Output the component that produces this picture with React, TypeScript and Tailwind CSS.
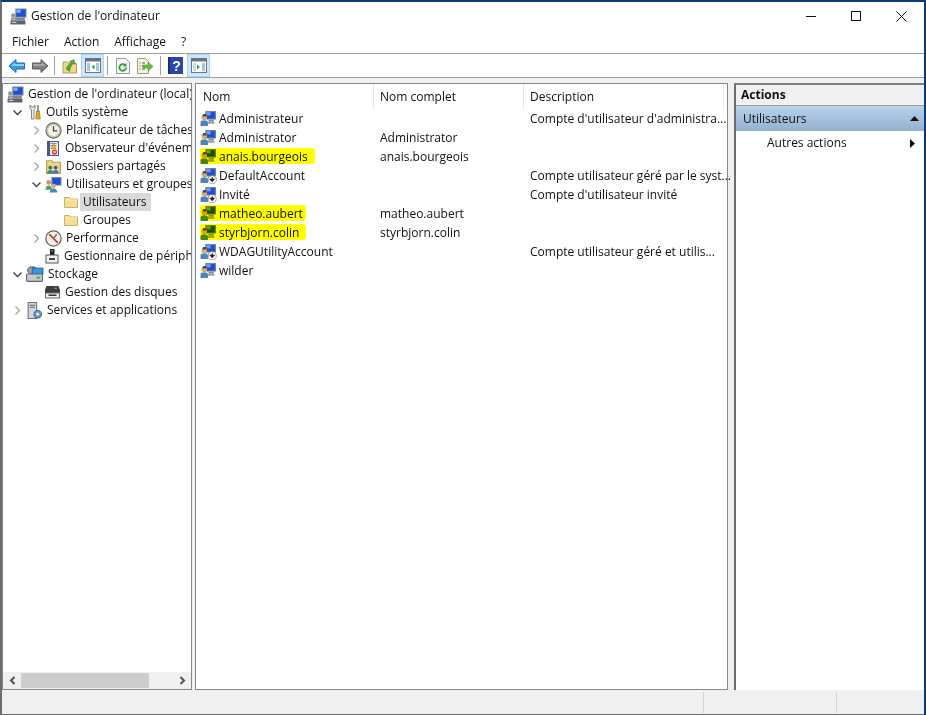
import type { ReactNode } from 'react';

// Petites icones MMC dessinees a la main (16x16)
function Computer() {
  return (
    <g>
      <rect x="5" y="1" width="10" height="8" fill="#6f7f90" />
      <rect x="6" y="2" width="8" height="6" fill="#1f4fd8" />
      <rect x="6" y="2" width="4" height="3" fill="#6aa4ee" />
      <rect x="8" y="9" width="5" height="2" fill="#8a8f96" />
    </g>
  );
}

function UserIcon({ down }: { down?: boolean }) {
  return (
    <svg width="17" height="17" viewBox="0 0 16 16" className="shrink-0">
      <Computer />
      <circle cx="4" cy="7" r="2.6" fill="#d9a878" />
      <path d="M3 3.8h3v2.4H2.2z" fill="#5a4632" />
      <path d="M0.5 15v-3.2c0-1.4 1.4-2.2 3.5-2.2s3.5.8 3.5 2.2V15z" fill="#4c86b8" />
      <path d="M7.5 11h6v2h-6z" fill="#9aa3ad" />
      {down && (
        <g>
          <circle cx="11.5" cy="12" r="3.8" fill="#fff" stroke="#777" strokeWidth="0.6" />
          <path d="M11.5 9.6v3M9.8 11.6l1.7 2 1.7-2z" stroke="#222" strokeWidth="1.1" fill="#222" />
        </g>
      )}
    </svg>
  );
}

function Folder() {
  return (
    <svg width="16" height="16" viewBox="0 0 16 16" className="shrink-0">
      <path d="M1.5 3.5h5l1 1.5h7v8.5h-13z" fill="#f7dc94" stroke="#cdb06a" />
      <path d="M2 6h12" stroke="#fdf0c4" />
    </svg>
  );
}

function MgmtIcon() {
  return (
    <svg width="17" height="17" viewBox="0 0 16 16" className="shrink-0">
      <rect x="5" y="0.5" width="10.5" height="8.5" fill="#6f7f90" />
      <rect x="6" y="1.5" width="8.5" height="6.5" fill="#1f4fd8" />
      <rect x="6" y="1.5" width="4" height="3" fill="#7cb0f0" />
      <rect x="1" y="9" width="13" height="3" fill="#7f878f" />
      <rect x="0.5" y="12" width="14" height="3.5" fill="#5b636b" />
      <path d="M2 13.5h4M2 10.5h3" stroke="#c8ccd0" />
      <circle cx="3" cy="7" r="2" fill="#8f99a3" />
    </svg>
  );
}

function Tools() {
  return (
    <svg width="16" height="17" viewBox="0 0 16 17" className="shrink-0">
      <path d="M4 1v3.5l1.5 1V15H8V5.5l1-1V1L7.5 3h-2z" fill="#eee" stroke="#777" strokeWidth="0.9" />
      <rect x="11" y="1" width="2" height="6" fill="#999" />
      <path d="M10.5 7h3l.7 8h-4.400z" fill="#e9a417" stroke="#8a6410" strokeWidth="0.6" />
    </svg>
  );
}

function Clock() {
  return (
    <svg width="17" height="17" viewBox="0 0 16 16" className="shrink-0">
      <circle cx="8" cy="8" r="7.200" fill="#c9c2ac" stroke="#6f6f6f" />
      <circle cx="8" cy="8" r="5.200" fill="#f5f1e4" />
      <path d="M8 4v4.300h3.500" fill="none" stroke="#3d3d3d" strokeWidth="1.200" />
    </svg>
  );
}

function EventLog() {
  return (
    <svg width="16" height="17" viewBox="0 0 16 17" className="shrink-0">
      <rect x="2" y="1" width="12" height="15" fill="#40588c" />
      <rect x="5" y="2" width="8" height="13" fill="#f3ecd8" />
      <path d="M5.500 3.500h6M5.500 5.500h6" stroke="#888" />
      <path d="M8.500 4l2.500 4.500H6z" fill="#f2c422" stroke="#7a5c00" strokeWidth="0.5" />
      <circle cx="9.500" cy="12" r="2.600" fill="#d8343c" />
      <path d="M8.500 11l2 2M10.500 11l-2 2" stroke="#fff" />
    </svg>
  );
}

function SharedFolder() {
  return (
    <svg width="17" height="17" viewBox="0 0 16 16" className="shrink-0">
      <path d="M1.500 2.500h5l1 1.500h7v10.500h-13z" fill="#eed488" stroke="#b89a52" />
      <circle cx="5" cy="9" r="1.800" fill="#2f7a52" />
      <path d="M2 14.500c0-2 1.200-3.200 3-3.200s3 1.200 3 3.200z" fill="#3b8f64" />
      <circle cx="10" cy="9" r="1.800" fill="#3a5fa8" />
      <path d="M7 14.500c0-2 1.200-3.200 3-3.200s3 1.200 3 3.200z" fill="#4a73c0" />
    </svg>
  );
}

function UsersGroup() {
  return (
    <svg width="17" height="17" viewBox="0 0 16 16" className="shrink-0">
      <rect x="6" y="1" width="9.500" height="8" fill="#6f7f90" />
      <rect x="7" y="2" width="7.500" height="6" fill="#1f4fd8" />
      <circle cx="3.500" cy="6" r="2.300" fill="#c99a6c" />
      <path d="M0.500 13c0-2.500 1.300-4 3-4s3 1.500 3 4z" fill="#4f9a64" />
      <circle cx="8" cy="9.500" r="2.200" fill="#d9ad80" />
      <path d="M4.500 15.500c0-2.500 1.500-3.800 3.500-3.800s3.500 1.300 3.500 3.800z" fill="#4c86b8" />
    </svg>
  );
}

function PerfIcon() {
  return (
    <svg width="17" height="17" viewBox="0 0 16 16" className="shrink-0">
      <circle cx="8" cy="8" r="7.200" fill="#f4f0e6" stroke="#666" strokeWidth="1.200" />
      <path d="M4 4l8 8" stroke="#d8202a" strokeWidth="1.600" />
      <path d="M8 8l3-4" stroke="#2c8a4a" strokeWidth="1.200" />
    </svg>
  );
}

function DeviceIcon() {
  return (
    <svg width="16" height="17" viewBox="0 0 16 17" className="shrink-0">
      <rect x="6" y="1" width="4.500" height="6" fill="#222" />
      <rect x="7.500" y="2" width="1.500" height="1.500" fill="#39c13f" />
      <rect x="2" y="7" width="12" height="8" fill="#f0f0f0" stroke="#555" />
      <rect x="5" y="10" width="6" height="2" fill="#444" />
    </svg>
  );
}

function StorageIcon() {
  return (
    <svg width="18" height="17" viewBox="0 0 17 16" className="shrink-0">
      <ellipse cx="6" cy="4" rx="4.500" ry="3.200" fill="#9aa3ad" stroke="#5e666e" />
      <rect x="6" y="2" width="10" height="5.500" fill="#2f9be0" stroke="#236fa3" />
      <rect x="0.500" y="7.500" width="15" height="7" rx="1" fill="#c4cad0" stroke="#5e666e" />
      <rect x="10" y="10" width="3" height="2" fill="#39b54a" />
    </svg>
  );
}

function DiskIcon() {
  return (
    <svg width="17" height="16" viewBox="0 0 16 16" className="shrink-0">
      <path d="M2 2h12l1.500 4v3H.500V6z" fill="#3c3c3c" />
      <rect x="10" y="3.500" width="2.500" height="1.500" fill="#3ec545" />
      <rect x="1" y="9" width="14" height="5" fill="#efefef" stroke="#666" />
      <rect x="4" y="10.500" width="8" height="1.500" fill="#333" />
    </svg>
  );
}

function ServicesIcon() {
  return (
    <svg width="17" height="17" viewBox="0 0 16 16" className="shrink-0">
      <rect x="2" y="0.500" width="8" height="15" fill="#d5d9dd" stroke="#6a7279" />
      <path d="M3.500 3h5M3.500 5h5" stroke="#5a6269" />
      <circle cx="11" cy="11.500" r="3.500" fill="#6d9ac6" stroke="#3d6994" />
      <circle cx="11" cy="11.500" r="1.300" fill="#fff" />
    </svg>
  );
}

function Chevron({ open }: { open?: boolean }) {
  return (
    <svg width="9" height="9" viewBox="0 0 9 9" className="shrink-0">
      {open ? (
        <path d="M0.500 2.500l4 4 4-4" fill="none" stroke="#3f3f3f" strokeWidth="1.300" />
      ) : (
        <path d="M2.500 0.500l4 4-4 4" fill="none" stroke="#a6a6a6" strokeWidth="1.300" />
      )}
    </svg>
  );
}

function BackArrow() {
  return (
    <svg width="18" height="16" viewBox="0 0 18 16">
      <path d="M8 1.500L1 8l7 6.500V11h8.500V5H8z" fill="#2f9bf0" stroke="#1a6cb8" />
      <path d="M7 4.500L3 8h13V6H7z" fill="#8fd0fb" />
    </svg>
  );
}

function ForwardArrow() {
  return (
    <svg width="18" height="16" viewBox="0 0 18 16">
      <path d="M10 1.500L17 8l-7 6.500V11H1.500V5H10z" fill="#808080" stroke="#5c5c5c" />
      <path d="M11 4.500L15 8H2V6h9z" fill="#a8a8a8" />
    </svg>
  );
}

function UpFolder() {
  return (
    <svg width="16" height="16" viewBox="0 0 16 16">
      <path d="M1 4h5l1 1.500h7.500V15H1z" fill="#f1d68c" stroke="#b99a50" />
      <path d="M4 11c1-3 3-5 5-6L7.500 3.500 12 1.500l1 5-1.500-1.300C9.500 7 8 10 7.500 13.500z" fill="#4fae2e" stroke="#2f7a18" strokeWidth="0.500" />
    </svg>
  );
}

function PaneIcon({ side }: { side: 'left' | 'right' }) {
  return (
    <svg width="16" height="15" viewBox="0 0 16 15">
      <rect x="0.500" y="0.500" width="15" height="14" fill="#fff" stroke="#6b7480" />
      <rect x="1" y="1" width="14" height="2.500" fill="#6b7480" />
      <rect x="2" y="5" width="3" height="8" fill={side === 'right' ? '#c8dcf0' : '#a9c4e0'} />
      <rect x="11" y="5" width="3" height="8" fill="#a9c4e0" />
      {side === 'left' ? <path d="M9.500 6.500v5L6.500 9z" fill="#2fa84a" /> : <path d="M6 6.500v5L9 9z" fill="#2fa84a" />}
    </svg>
  );
}

function Refresh() {
  return (
    <svg width="14" height="16" viewBox="0 0 14 16">
      <path d="M0.500 0.500h9l4 4v11H.500z" fill="#f6f6f2" stroke="#9a9a9a" />
      <path d="M10 9.500a3.300 3.300 0 1 1-1-2.400" fill="none" stroke="#2f9a3a" strokeWidth="1.800" />
      <path d="M10.500 5v3.500H7z" fill="#2f9a3a" />
    </svg>
  );
}

function ExportList() {
  return (
    <svg width="17" height="16" viewBox="0 0 17 16">
      <path d="M0.500 0.500h8l3 3v12H.500z" fill="#f8f3de" stroke="#a09a80" />
      <path d="M2.500 5h1M5 5h3M2.500 8h1M5 8h3M2.500 11h1M5 11h3" stroke="#555" />
      <path d="M6 7h5V4l5 4.500-5 4.500v-3H6z" fill="#5fc23a" stroke="#3a8a1e" strokeWidth="0.500" />
    </svg>
  );
}

function HelpBook() {
  return (
    <svg width="15" height="17" viewBox="0 0 15 17" className="shrink-0">
      <rect width="15" height="17" fill="#2c47a8" />
      <rect x="0" y="0" width="2" height="17" fill="#1b2c78" />
      <text x="8.500" y="14" fontSize="14" fontWeight="700" fill="#fff" textAnchor="middle" fontFamily="Liberation Sans, sans-serif">?</text>
    </svg>
  );
}

function ToolBtn({ children, active }: { children: ReactNode; active?: boolean }) {
  return (
    <div className={`flex h-[23px] w-[23px] items-center justify-center ${active ? 'border border-[#a8d4f5] bg-[#cce8ff]' : ''}`}>
      {children}
    </div>
  );
}

function Sep() {
  return <div className="mx-[3px] h-[19px] w-px bg-[#a0a0a0]" />;
}

type TreeItem = { label: string; icon: ReactNode; pad: string; chevron?: 'open' | 'closed'; selected?: boolean };

const tree: TreeItem[] = [
  { label: "Gestion de l'ordinateur (local)", icon: <MgmtIcon />, pad: 'pl-[4px]' },
  { label: 'Outils système', icon: <Tools />, pad: 'pl-[10px]', chevron: 'open' },
  { label: 'Planificateur de tâches', icon: <Clock />, pad: 'pl-[29px]', chevron: 'closed' },
  { label: "Observateur d'événements", icon: <EventLog />, pad: 'pl-[29px]', chevron: 'closed' },
  { label: 'Dossiers partagés', icon: <SharedFolder />, pad: 'pl-[29px]', chevron: 'closed' },
  { label: 'Utilisateurs et groupes locaux', icon: <UsersGroup />, pad: 'pl-[29px]', chevron: 'open' },
  { label: 'Utilisateurs', icon: <Folder />, pad: 'pl-[60px]', selected: true },
  { label: 'Groupes', icon: <Folder />, pad: 'pl-[60px]' },
  { label: 'Performance', icon: <PerfIcon />, pad: 'pl-[29px]', chevron: 'closed' },
  { label: 'Gestionnaire de périphériques', icon: <DeviceIcon />, pad: 'pl-[41px]' },
  { label: 'Stockage', icon: <StorageIcon />, pad: 'pl-[10px]', chevron: 'open' },
  { label: 'Gestion des disques', icon: <DiskIcon />, pad: 'pl-[41px]' },
  { label: 'Services et applications', icon: <ServicesIcon />, pad: 'pl-[10px]', chevron: 'closed' },
];

type UserRow = { name: string; full?: string; desc?: string; down?: boolean; mark?: string };

const users: UserRow[] = [
  { name: 'Administrateur', desc: "Compte d'utilisateur d'administra..." },
  { name: 'Administrator', full: 'Administrator' },
  { name: 'anais.bourgeois', full: 'anais.bourgeois', mark: 'w-[115px]' },
  { name: 'DefaultAccount', desc: 'Compte utilisateur géré par le syst...', down: true },
  { name: 'Invité', desc: "Compte d'utilisateur invité", down: true },
  { name: 'matheo.aubert', full: 'matheo.aubert', mark: 'w-[106px]' },
  { name: 'styrbjorn.colin', full: 'styrbjorn.colin', mark: 'w-[106px]' },
  { name: 'WDAGUtilityAccount', desc: 'Compte utilisateur géré et utilis...', down: true },
  { name: 'wilder' },
];

export default function App() {
  return (
    <div
      className="flex h-[715px] w-[926px] flex-col overflow-hidden border-t-2 border-r-2 border-l-2 border-t-[#0b3a7c] border-r-[#0b3a7c] border-l-[#6d6d6d] bg-[#f0f0f0] text-[12px] leading-none text-[#111]"
      style={{ fontFamily: '"Open Sans", "Noto Sans", sans-serif' }}
    >
      {/* barre de titre */}
      <div className="flex h-[28px] shrink-0 items-center bg-white pl-[8px]">
        <MgmtIcon />
        <span className="ml-[4px]">Gestion de l'ordinateur</span>
        <div className="ml-auto flex items-center">
          <div className="flex w-[45px] justify-center">
            <div className="h-px w-[10px] bg-[#111]" />
          </div>
          <div className="flex w-[45px] justify-center">
            <div className="h-[10px] w-[10px] border border-[#111]" />
          </div>
          <div className="flex w-[46px] justify-center">
            <svg width="11" height="11" viewBox="0 0 11 11">
              <path d="M0.500 0.500l10 10M10.500 0.500l-10 10" stroke="#111" />
            </svg>
          </div>
        </div>
      </div>

      {/* menu */}
      <div className="flex h-[24px] shrink-0 items-center gap-[15px] border-b border-[#a0a0a0] bg-white pl-[10px]">
        <span>Fichier</span>
        <span>Action</span>
        <span>Affichage</span>
        <span>?</span>
      </div>

      {/* barre d'outils */}
      <div className="flex h-[24px] shrink-0 items-center border-b border-[#a0a0a0] bg-white pl-[3px]">
        <ToolBtn><BackArrow /></ToolBtn>
        <ToolBtn><ForwardArrow /></ToolBtn>
        <Sep />
        <ToolBtn><UpFolder /></ToolBtn>
        <ToolBtn active><PaneIcon side="left" /></ToolBtn>
        <Sep />
        <ToolBtn><Refresh /></ToolBtn>
        <ToolBtn><ExportList /></ToolBtn>
        <Sep />
        <ToolBtn><HelpBook /></ToolBtn>
        <ToolBtn active><PaneIcon side="right" /></ToolBtn>
      </div>

      {/* panneaux */}
      <div className="flex min-h-0 flex-1 pt-[5px]">
        {/* arbre */}
        <div className="flex w-[190px] shrink-0 flex-col border border-[#828790] bg-white">
          <div className="min-h-0 flex-1 overflow-hidden pt-[1px]">
            {tree.map((t) => (
              <div key={t.label} className={`flex h-[18px] items-center whitespace-nowrap ${t.pad}`}>
                {t.chevron && (
                  <span className="mr-[4px] flex w-[9px] justify-center">
                    <Chevron open={t.chevron === 'open'} />
                  </span>
                )}
                {t.icon}
                <span className={`ml-[1px] flex h-[18px] items-center pl-[3px] pr-[4px] ${t.selected ? 'bg-[#d9d9d9]' : ''}`}>{t.label}</span>
              </div>
            ))}
          </div>
          <div className="flex h-[17px] shrink-0 items-center bg-[#f0f0f0]">
            <div className="flex w-[18px] justify-center">
              <svg width="7" height="9" viewBox="0 0 7 9"><path d="M5.500 1L2 4.500 5.500 8" fill="none" stroke="#505050" strokeWidth="2" /></svg>
            </div>
            <div className="h-[15px] w-[128px] bg-[#cdcdcd]" />
            <div className="ml-auto flex w-[18px] justify-center">
              <svg width="7" height="9" viewBox="0 0 7 9"><path d="M1.500 1L5 4.500 1.500 8" fill="none" stroke="#505050" strokeWidth="2" /></svg>
            </div>
          </div>
        </div>

        {/* liste */}
        <div className="ml-[3px] w-[533px] shrink-0 border border-[#828790] bg-white">
          <div className="flex h-[25px] items-center">
            <div className="flex h-full w-[178px] items-center border-r border-[#e5e5e5] pl-[7px]">Nom</div>
            <div className="flex h-full w-[150px] items-center border-r border-[#e5e5e5] pl-[6px]">Nom complet</div>
            <div className="flex h-full w-[200px] items-center border-r border-[#e5e5e5] pl-[6px]">Description</div>
          </div>
          {users.map((u) => (
            <div key={u.name} className="relative flex h-[19px] items-center whitespace-nowrap">
              <div className="flex h-full w-[178px] items-center pl-[4px]">
                <UserIcon down={u.down} />
                <span className="ml-[2px]">{u.name}</span>
              </div>
              <div className="w-[150px] pl-[6px]">{u.full}</div>
              <div className="w-[200px] pl-[6px]">{u.desc}</div>
              {u.mark && <div className={`absolute top-[1px] left-[4px] h-[16px] rounded-[3px] bg-[#ffff00] mix-blend-multiply ${u.mark}`} />}
            </div>
          ))}
        </div>

        {/* actions */}
        <div className="ml-[6px] min-w-0 flex-1 border-t-2 border-l-2 border-t-[#7f7f7f] border-l-[#6d6d6d] bg-white">
          <div className="flex h-[21px] items-center border-b border-[#a0a0a0] bg-[#f0f0f0] pl-[5px] font-bold">Actions</div>
          <div className="flex h-[25px] items-center bg-gradient-to-b from-[#bad1ea] to-[#94b1d1] pl-[7px] pr-[5px]">
            <span>Utilisateurs</span>
            <svg width="9" height="5" viewBox="0 0 9 5" className="ml-auto"><path d="M4.500 0L9 5H0z" fill="#111" /></svg>
          </div>
          <div className="flex h-[24px] items-center pl-[31px] pr-[9px]">
            <span>Autres actions</span>
            <svg width="5" height="9" viewBox="0 0 5 9" className="ml-auto"><path d="M0 0l5 4.500L0 9z" fill="#111" /></svg>
          </div>
        </div>
      </div>

      {/* barre d'etat */}
      <div className="mt-[1px] flex h-[24px] shrink-0 items-stretch border-b border-[#6d6d6d] bg-[#f0f0f0] py-[1px]">
        <div className="w-[702px] border-r border-[#d4d4d4]" />
        <div className="w-[133px] border-r border-[#d4d4d4]" />
      </div>
    </div>
  );
}
